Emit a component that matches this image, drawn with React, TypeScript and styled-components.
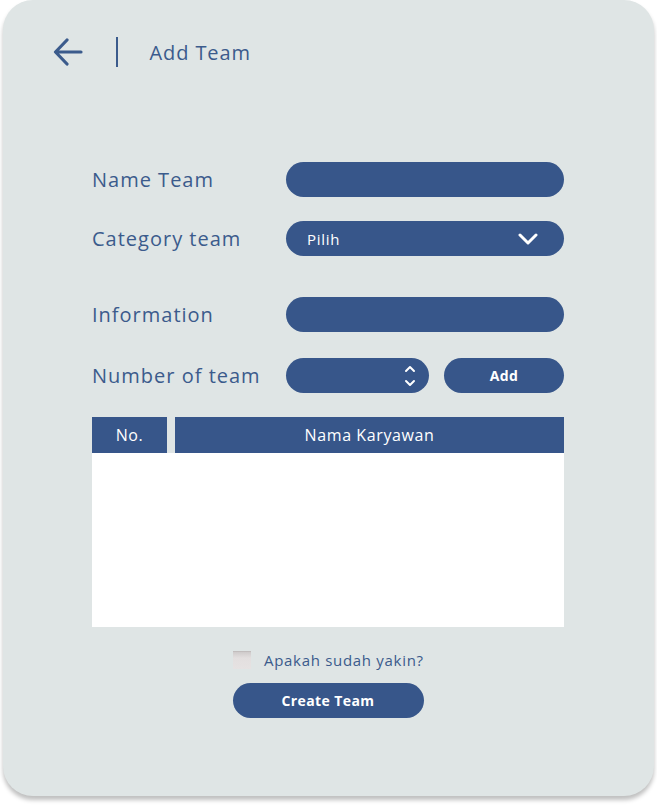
import React from "react";
import styled, { createGlobalStyle } from "styled-components";

const blue = "#37568a";
const text = "#3b5b8c";

const GlobalStyle = createGlobalStyle`
  html, body {
    margin: 0;
    padding: 0;
    background: #ffffff;
  }
  body {
    font-family: "Open Sans", "Liberation Sans", sans-serif;
  }
`;

const Page = styled.div`
  width: 657px;
  height: 806px;
  padding: 0 3px;
  box-sizing: border-box;
`;

const Card = styled.div`
  height: 796px;
  background: #dfe5e5;
  border-radius: 30px;
  box-shadow: 0 4px 4px rgba(0, 0, 0, 0.25);
  box-sizing: border-box;
  padding-top: 37px;
`;

const Header = styled.div`
  display: flex;
  align-items: center;
  height: 30px;
  padding-left: 50px;
`;

const BackButton = styled.button`
  border: none;
  background: none;
  padding: 0;
  width: 30px;
  height: 28px;
  display: flex;
  cursor: pointer;
`;

const Divider = styled.div`
  width: 1.5px;
  height: 30px;
  background: ${text};
  margin-left: 33px;
`;

const Title = styled.div`
  margin-left: 32px;
  font-size: 20px;
  letter-spacing: 0.9px;
  color: ${text};
`;

const Form = styled.div`
  margin: 95px 0 0 89px;
  width: 472px;
`;

const Row = styled.div<{ $gap: number }>`
  display: grid;
  grid-template-columns: 194px 1fr;
  align-items: center;
  margin-top: ${(p) => p.$gap}px;
`;

const Label = styled.div`
  font-size: 20px;
  letter-spacing: 1px;
  color: ${text};
`;

const Pill = styled.div`
  height: 35px;
  border-radius: 18px;
  background: ${blue};
  box-sizing: border-box;
`;

const Select = styled(Pill)`
  display: flex;
  align-items: center;
  justify-content: space-between;
  padding: 0 26px 0 21px;
  color: #ffffff;
  font-size: 15px;
  letter-spacing: 0.7px;
`;

const NumberGroup = styled.div`
  display: flex;
  gap: 15px;
`;

const Spinner = styled(Pill)`
  width: 143px;
  display: flex;
  align-items: center;
  justify-content: flex-end;
  padding-right: 13px;
`;

const PillButton = styled.button<{ $width: number }>`
  width: ${(p) => p.$width}px;
  height: 35px;
  border: none;
  border-radius: 18px;
  background: ${blue};
  color: #ffffff;
  font-family: "Open Sans", "Liberation Sans", sans-serif;
  font-weight: 700;
  font-size: 14px;
  letter-spacing: 0.4px;
  cursor: pointer;
`;

const Table = styled.div`
  margin-top: 24px;
  background: #ffffff;
  height: 210px;
`;

const TableHead = styled.div`
  display: grid;
  grid-template-columns: 75px 1fr;
  gap: 8px;
  background: #dfe5e5;
`;

const HeadCell = styled.div`
  height: 36px;
  background: ${blue};
  color: #ffffff;
  font-size: 16px;
  letter-spacing: 0.6px;
  display: flex;
  align-items: center;
  justify-content: center;
`;

const Footer = styled.div`
  display: flex;
  flex-direction: column;
  align-items: center;
  margin-top: 23px;
  gap: 13px;
`;

const ConfirmRow = styled.label`
  align-self: flex-start;
  display: flex;
  align-items: center;
  gap: 13px;
  margin-left: 141px;
  font-size: 15px;
  letter-spacing: 0.7px;
  color: ${text};
`;

const CheckBox = styled.span`
  width: 18px;
  height: 18px;
  box-sizing: border-box;
  background: linear-gradient(#cfcbcb, #e3dfdf 35%, #e6e2e2);
  border-top: 1px solid #c2bdbd;
`;

const ArrowLeft = () => (
  <svg width="30" height="28" viewBox="0 0 30 28" fill="none">
    <path
      d="M28 14H3M14 2L2.5 14L14 26"
      stroke={text}
      strokeWidth="3.2"
      strokeLinecap="round"
      strokeLinejoin="round"
    />
  </svg>
);

const ChevronDown = () => (
  <svg width="20" height="14" viewBox="0 0 20 14" fill="none">
    <path
      d="M2 3L10 11L18 3"
      stroke="#ffffff"
      strokeWidth="3"
      strokeLinecap="round"
      strokeLinejoin="round"
    />
  </svg>
);

const SpinnerArrows = () => (
  <svg width="12" height="24" viewBox="0 0 12 24" fill="none">
    <path
      d="M2 7L6 3L10 7M2 17L6 21L10 17"
      stroke="#ffffff"
      strokeWidth="2"
      strokeLinecap="round"
      strokeLinejoin="round"
    />
  </svg>
);

export default function App() {
  return (
    <>
      <GlobalStyle />
      <Page>
        <Card>
          <Header>
            <BackButton aria-label="Back">
              <ArrowLeft />
            </BackButton>
            <Divider />
            <Title>Add Team</Title>
          </Header>
          <Form>
            <Row $gap={0}>
              <Label>Name Team</Label>
              <Pill />
            </Row>
            <Row $gap={24}>
              <Label>Category team</Label>
              <Select>
                <span>Pilih</span>
                <ChevronDown />
              </Select>
            </Row>
            <Row $gap={41}>
              <Label>Information</Label>
              <Pill />
            </Row>
            <Row $gap={26}>
              <Label>Number of team</Label>
              <NumberGroup>
                <Spinner>
                  <SpinnerArrows />
                </Spinner>
                <PillButton $width={120}>Add</PillButton>
              </NumberGroup>
            </Row>
            <Table>
              <TableHead>
                <HeadCell>No.</HeadCell>
                <HeadCell>Nama Karyawan</HeadCell>
              </TableHead>
            </Table>
            <Footer>
              <ConfirmRow>
                <CheckBox />
                Apakah sudah yakin?
              </ConfirmRow>
              <PillButton $width={191}>Create Team</PillButton>
            </Footer>
          </Form>
        </Card>
      </Page>
    </>
  );
}
